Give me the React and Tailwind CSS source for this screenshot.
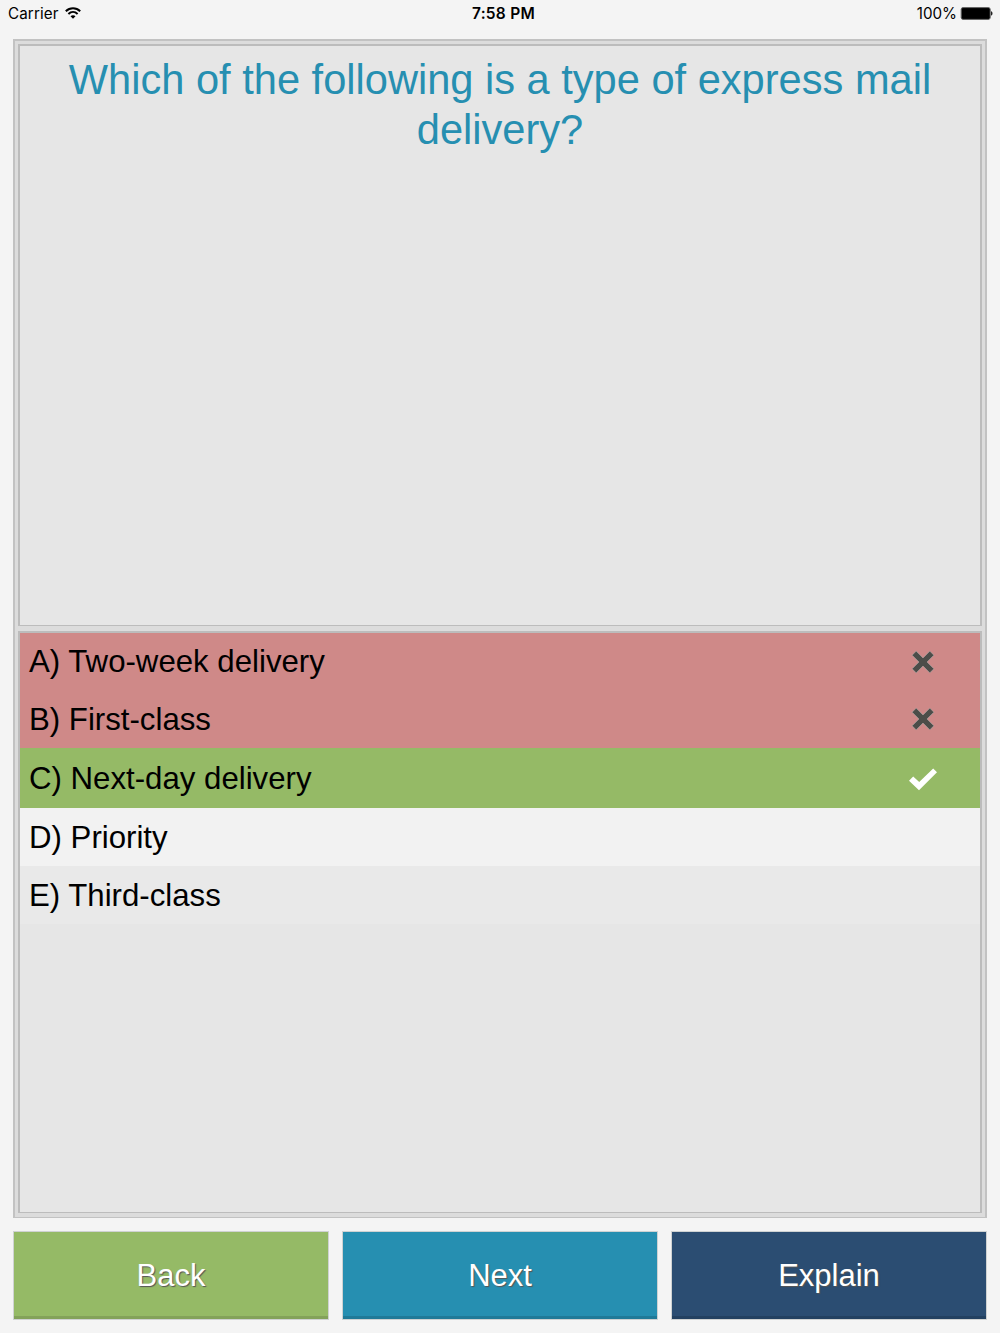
import clsx from "clsx";

const ANSWERS = [
  { label: "A) Two-week delivery", status: "wrong", row: "h-[56px] bg-[#cf8988]" },
  { label: "B) First-class", status: "wrong", row: "h-[59px] bg-[#cf8988]" },
  { label: "C) Next-day delivery", status: "correct", row: "h-[60px] bg-[#95ba66]" },
  { label: "D) Priority", row: "h-[58px] bg-[#f2f2f2]" },
  { label: "E) Third-class", row: "h-[58px] bg-[#e9e9e9]" },
];

const BUTTONS = [
  { label: "Back", color: "bg-[#95ba66]", edge: "bg-[#83a25a]" },
  { label: "Next", color: "bg-[#268fb1]", edge: "bg-[#207a98]" },
  { label: "Explain", color: "bg-[#2b4d72]", edge: "bg-[#234161]" },
];

const WifiIcon = () => (
  <svg className="mb-[2px] ml-[7px] h-3 w-4" viewBox="0 0 16 12" fill="none" stroke="#000" strokeWidth="2">
    <path d="M0.8 4.2C4.9 0.2 11.1 0.2 15.2 4.2" />
    <path d="M3.4 7C6.1 4.4 9.9 4.4 12.6 7" />
    <path d="M8 11.8L5.5 9.2C6.9 7.8 9.1 7.8 10.5 9.2Z" fill="#000" stroke="none" />
  </svg>
);

const BatteryIcon = () => (
  <svg className="mb-px ml-[3px] h-[13px] w-[33px]" viewBox="0 0 33 13">
    <rect x="1.2" y="0.6" width="29" height="11.8" rx="1.8" fill="#000" stroke="#666" strokeWidth="1" />
    <path d="M31 4.3C33 4.8 33 8.2 31 8.7Z" fill="#222" />
  </svg>
);

const CrossIcon = () => (
  <svg className="h-6 w-6" viewBox="0 0 24 24">
    <path
      d="M5.2 1.1L12 7.9L18.8 1.1L22.9 5.2L16.1 12L22.9 18.8L18.8 22.9L12 16.1L5.2 22.9L1.1 18.8L7.9 12L1.1 5.2Z"
      fill="#4c4d49"
      stroke="#b5a5a3"
      strokeWidth="0.7"
      strokeLinejoin="round"
    />
  </svg>
);

const CheckIcon = () => (
  <svg className="h-6 w-7" viewBox="0 0 28 24">
    <path d="M0 13.7L4.2 9.5L10.2 15L24.2 1.5L28 5.2L10 23.2Z" fill="#fff" />
  </svg>
);

const StatusBar = () => (
  <header className="grid h-[39px] grid-cols-3 items-start pl-2 pr-[7px] pt-[4px] font-['Inter',sans-serif] text-[15.2px] leading-5 text-black">
    <div className="flex items-center">
      <span className="tracking-[0.1px]">Carrier</span>
      <WifiIcon />
    </div>
    <div className="pl-[6px] text-center text-[15.5px] font-semibold tracking-[0.25px]">7:58 PM</div>
    <div className="flex items-center justify-end">
      <span>100%</span>
      <BatteryIcon />
    </div>
  </header>
);

const Answer = ({ label, status, row }) => (
  <li className={clsx("flex items-center justify-between pl-[9px] text-[31.2px]", row)}>
    <span className="pt-[3px]">{label}</span>
    {status && (
      <span className="mr-[43px] flex w-7 justify-center pt-px">
        {status === "wrong" ? <CrossIcon /> : <CheckIcon />}
      </span>
    )}
  </li>
);

const ActionButton = ({ label, color, edge }) => (
  <button className={clsx("flex h-[89px] flex-1 flex-col border border-[#cfd2d2]", color)}>
    <span className="flex w-full flex-1 items-center justify-center pt-1 text-[31px] text-white [text-shadow:1px_1px_1px_#555]">
      {label}
    </span>
    <span className={clsx("h-[3px] w-full", edge)} />
  </button>
);

export default function App() {
  return (
    <div className="flex h-[1333px] w-[1000px] flex-col bg-[#f4f4f4] font-['Liberation_Sans',Arial,sans-serif] text-black">
      <StatusBar />

      <main className="mx-[13px] flex h-[1179px] flex-col gap-[5px] border-2 border-b border-[#c2c2c2] bg-[#dcdcdc] px-[3px] pb-[4px] pt-[3px]">
        <section className="h-[582px] border-2 border-b border-[#bcbcbc] bg-[#e6e6e6] pt-[9px]">
          <h1 className="text-center text-[41.6px] leading-[50px] text-[#268fb1]">
            Which of the following is a type of express mail
            <br />
            delivery?
          </h1>
        </section>

        <section className="flex-1 border-2 border-b border-[#bcbcbc] bg-[#e6e6e6]">
          <ul>
            {ANSWERS.map((answer) => (
              <Answer key={answer.label} {...answer} />
            ))}
          </ul>
        </section>
      </main>

      <footer className="mx-[13px] mt-[13px] flex gap-[13px]">
        {BUTTONS.map((button) => (
          <ActionButton key={button.label} {...button} />
        ))}
      </footer>
    </div>
  );
}
